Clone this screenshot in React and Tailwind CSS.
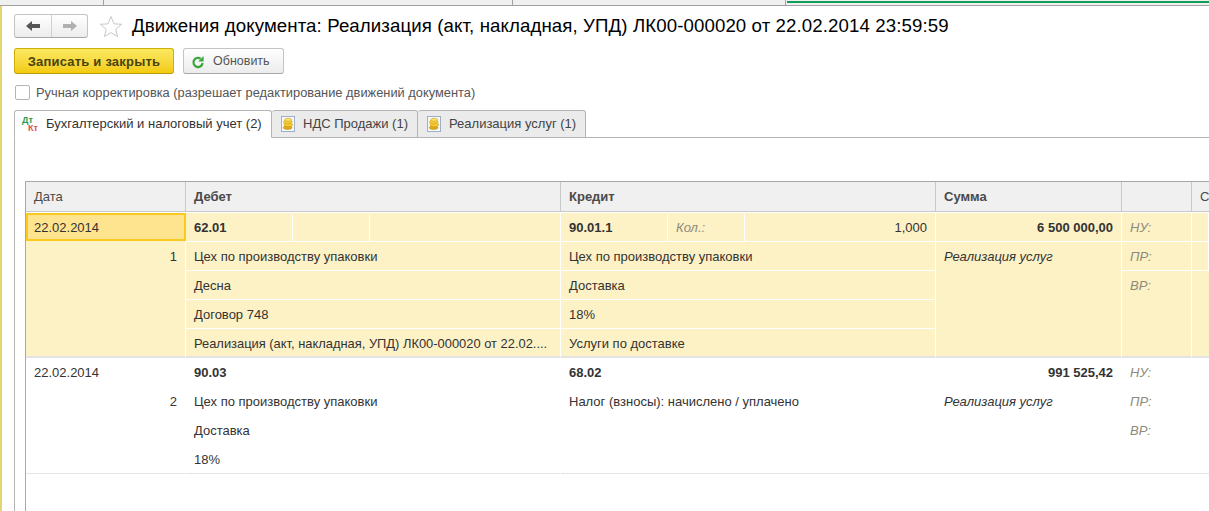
const columns = 'grid grid-cols-[160px_375px_375px_186px_70px_1fr]';

const CoinsIcon = () => (
  <svg width="14" height="16" viewBox="0 0 14 16" className="shrink-0">
    <rect x="0.5" y="0.5" width="13" height="15" fill="#f6f7f9" stroke="#9fb0c4" />
    <ellipse cx="6.6" cy="11.6" rx="4.4" ry="1.9" fill="#e0a818" stroke="#b98a10" strokeWidth="0.5" />
    <ellipse cx="7.4" cy="8.8" rx="4.4" ry="1.9" fill="#f5cb35" stroke="#c8950e" strokeWidth="0.5" />
    <ellipse cx="6.8" cy="6" rx="4.4" ry="1.9" fill="#f5cb35" stroke="#c8950e" strokeWidth="0.5" />
    <ellipse cx="7.2" cy="3.8" rx="3.6" ry="1.5" fill="#fbe26a" stroke="#c8950e" strokeWidth="0.5" />
  </svg>
);

const RefreshIcon = () => (
  <svg width="14" height="14" viewBox="0 0 14 14" className="shrink-0">
    <path d="M9.6 3.6 A4.6 4.6 0 1 0 11.6 8" fill="none" stroke="#3aa53a" strokeWidth="2.2" />
    <path d="M12.6 1 V6.4 H7.2 Z" fill="#3aa53a" />
  </svg>
);

const Arrow = ({ color, flip }) => (
  <svg width="16" height="12" viewBox="0 0 16 12" className={flip ? 'scale-x-[-1]' : ''}>
    <path d="M1 6 L7 1 V4 H15 V8 H7 V11 Z" fill={color} />
  </svg>
);

const Tab = ({ icon, label, active, w }) => (
  <div
    className={`h-[28px] flex items-center border border-[#b4b4b4] rounded-t-[3px] ${w} ${
      active ? 'bg-white border-b-white text-[#333] gap-[7px] pl-[7px]' : 'bg-[#ebebeb] text-[#444] border-l-0 gap-[8px] pl-[9px]'
    }`}
  >
    {icon}
    <span className="whitespace-nowrap">{label}</span>
  </div>
);

const Cell = ({ className = '', children }) => (
  <div className={`h-[29px] flex items-center px-2 border-r border-white whitespace-nowrap overflow-hidden ${className}`}>{children}</div>
);

const SubCell = ({ w, className = '', children }) => (
  <div className={`h-full flex items-center px-2 border-r border-white ${w} ${className}`}>{children}</div>
);

const Label = ({ children }) => <span className="italic text-[#8c8a78]">{children}</span>;

function Row1() {
  const line = 'border-b border-white pt-px';
  const sep = 'border-b-2 border-b-[#e4e4e4]';
  return (
    <div className={`${columns} grid-rows-[repeat(5,29px)] bg-[#fdf1c6]`}>
      <div className="h-[28px] flex items-center pt-px px-[6px] bg-[#ffe48f] border-2 border-[#fbc91f]">22.02.2014</div>
      <div className="h-[29px] pt-px flex items-stretch border-r border-b border-white font-bold">
        <SubCell w="w-[107px]">62.01</SubCell>
        <SubCell w="w-[77px]" />
        <div className="flex-1" />
      </div>
      <div className="h-[29px] pt-px flex items-stretch border-r border-b border-white">
        <SubCell w="w-[107px]" className="font-bold">90.01.1</SubCell>
        <SubCell w="w-[77px]"><Label>Кол.:</Label></SubCell>
        <div className="flex-1 flex items-center justify-end px-2">1,000</div>
      </div>
      <Cell className={`${line} justify-end font-bold`}>6 500 000,00</Cell>
      <Cell className={line}><Label>НУ:</Label></Cell>
      <Cell className={line} />

      <div className={`row-span-4 border-r border-white ${sep} h-[116px] flex justify-end items-start px-2 pt-[5px]`}>1</div>
      <Cell className={line}>Цех по производству упаковки</Cell>
      <Cell className={line}>Цех по производству упаковки</Cell>
      <div className={`row-span-4 border-r border-white ${sep} h-[116px] px-2 pt-[5px] italic`}>Реализация услуг</div>
      <Cell className={line}><Label>ПР:</Label></Cell>
      <Cell className={line} />

      <Cell className={line}>Десна</Cell>
      <Cell className={line}>Доставка</Cell>
      <div className={`row-span-3 border-r border-white ${sep} h-[87px] px-2 pt-[5px]`}><Label>ВР:</Label></div>
      <div className={`row-span-3 ${sep} h-[87px]`} />

      <Cell className={line}>Договор 748</Cell>
      <Cell className={line}>18%</Cell>

      <Cell className={`${sep} pt-[2px] text-[12.9px]`}>Реализация (акт, накладная, УПД) ЛК00-000020 от 22.02....</Cell>
      <Cell className={`${sep} pt-[2px]`}>Услуги по доставке</Cell>
    </div>
  );
}

function Row2() {
  return (
    <div className={`${columns} grid-rows-[29px_29px_29px_28px] h-[116px] border-b border-[#e4e4e4]`}>
      <Cell>22.02.2014</Cell>
      <Cell className="font-bold">90.03</Cell>
      <Cell className="font-bold">68.02</Cell>
      <Cell className="justify-end font-bold">991 525,42</Cell>
      <Cell><Label>НУ:</Label></Cell>
      <Cell />

      <Cell className="justify-end">2</Cell>
      <Cell>Цех по производству упаковки</Cell>
      <Cell>Налог (взносы): начислено / уплачено</Cell>
      <Cell className="italic">Реализация услуг</Cell>
      <Cell><Label>ПР:</Label></Cell>
      <Cell />

      <Cell />
      <Cell>Доставка</Cell>
      <Cell />
      <Cell />
      <Cell><Label>ВР:</Label></Cell>
      <Cell />

      <Cell />
      <Cell>18%</Cell>
    </div>
  );
}

export default function App() {
  return (
    <div className="h-screen w-full overflow-hidden bg-white flex flex-col font-['Liberation_Sans',Arial,sans-serif] text-[13px] text-[#333]">
      {/* window strip */}
      <div className="h-[6px] shrink-0 flex bg-[#f0f0f0] border-b border-[#a0a0a0]">
        <div className="w-[104px] border-r border-[#a0a0a0]" />
        <div className="w-[409px] border-r border-[#a0a0a0]" />
        <div className="w-[273px] border-r border-[#a0a0a0]" />
        <div className="flex-1 pl-[1px] pt-px">
          <div className="h-[2px] bg-[#0f9d58]" />
        </div>
      </div>

      <div className="flex-1 min-h-0 flex flex-col border-l-2 border-[#e3d672] pl-[12px]">
        {/* head */}
        <div className="flex items-center h-[24px] mt-[8px]">
          <div className="w-[74px] h-[24px] flex rounded-[3px] border border-[#c4c4c4] border-b-[#a8a8a8] bg-gradient-to-b from-white to-[#ececec]">
            <div className="w-[37px] flex items-center justify-center border-r border-[#d0d0d0]">
              <Arrow color="#555" />
            </div>
            <div className="flex-1 flex items-center justify-center">
              <Arrow color="#b0b0b0" flip />
            </div>
          </div>
          <svg width="24" height="23" viewBox="0 0 24 23" className="ml-[11px]">
            <path d="M12 1.5 L15 8.8 L22.6 9.3 L16.8 14.2 L18.6 21.6 L12 17.6 L5.4 21.6 L7.2 14.2 L1.4 9.3 L9 8.8 Z" fill="white" stroke="#c8c8c8" />
          </svg>
          <h1 className="ml-[9px] text-[18.67px] tracking-[0.1px] leading-[24px] text-black whitespace-nowrap">
            Движения документа: Реализация (акт, накладная, УПД) ЛК00-000020 от 22.02.2014 23:59:59
          </h1>
        </div>

        {/* command bar */}
        <div className="flex gap-[9px] mt-[10px] h-[26px]">
          <button className="w-[160px] pt-px rounded-[3px] border border-[#cfae0a] border-b-[#b89a10] bg-gradient-to-b from-[#fbe95e] to-[#f3cb05] font-bold tracking-[0.2px] text-[#4a4410]">
            Записать и закрыть
          </button>
          <button className="w-[101px] pt-px rounded-[3px] border border-[#c4c4c4] border-b-[#a8a8a8] bg-gradient-to-b from-white to-[#ececec] flex items-center pl-[7px] gap-[8px] text-[12.5px] text-[#555]">
            <RefreshIcon />
            <span>Обновить</span>
          </button>
        </div>

        {/* manual adjust */}
        <label className="flex items-center mt-[11px] h-[15px] ml-px text-[12.85px] text-[#555]">
          <span className="w-[15px] h-[15px] rounded-[2px] border border-[#b4b4b4] bg-white" />
          <span className="ml-[6px]">Ручная корректировка (разрешает редактирование движений документа)</span>
        </label>

        {/* tabs */}
        <div className="flex mt-[10px] border-b border-[#b4b4b4] h-[28px]">
          <Tab
            active
            w="w-[258px]"
            label="Бухгалтерский и налоговый учет (2)"
            icon={
              <span className="w-[17px] h-[16px] flex flex-col text-[9px] leading-[8px] font-bold">
                <span className="text-[#1f9a4b]">Дт</span>
                <span className="text-[#e0504a] pl-[6px]">Кт</span>
              </span>
            }
          />
          <Tab w="w-[146px]" label="НДС Продажи (1)" icon={<CoinsIcon />} />
          <Tab w="w-[168px]" label="Реализация услуг (1)" icon={<CoinsIcon />} />
          <div className="flex-1" />
        </div>

        {/* panel */}
        <div className="flex-1 min-h-0 flex flex-col border-l border-[#b4b4b4] pl-[10px] pt-[43px]">
          <div className="flex-1 border-l border-t border-[#a8a8a8]">
            <div className={`${columns} h-[30px] bg-[#f0f0f0] border-b border-b-[#c8c8c8] text-[#4a4a4a]`}>
              <div className="flex items-center px-2 border-r border-[#c8c8c8]">Дата</div>
              <div className="flex items-center px-2 border-r border-[#c8c8c8] font-bold">Дебет</div>
              <div className="flex items-center px-2 border-r border-[#c8c8c8] font-bold">Кредит</div>
              <div className="flex items-center px-2 border-r border-[#c8c8c8] font-bold">Сумма</div>
              <div className="border-r border-[#c8c8c8]" />
              <div className="flex items-center px-2">С</div>
            </div>
            <div className="h-px bg-white" />
            <Row1 />
            <Row2 />
          </div>
        </div>
      </div>
    </div>
  );
}
